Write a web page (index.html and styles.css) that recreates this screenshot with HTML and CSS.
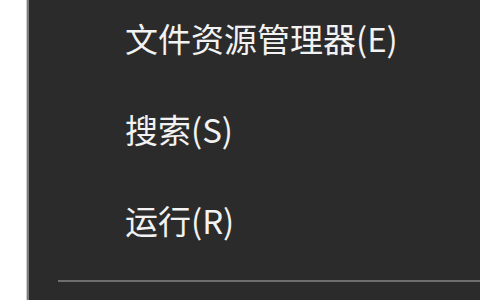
FILE: index.html
```html
<!DOCTYPE html>
<html lang="zh-CN">
  <head>
    <meta charset="UTF-8" />
    <meta name="viewport" content="width=device-width, initial-scale=1.0" />
    <title>开始菜单</title>
    <link rel="stylesheet" href="styles.css">
  </head>
  <body>
    <div class="menu">
      <div class="menu-item">文件资源管理器(E)</div>
      <div class="menu-item">搜索(S)</div>
      <div class="menu-item">运行(R)</div>
      <div class="separator"></div>
    </div>
  </body>
</html>
```

FILE: styles.css
```css
* {
  box-sizing: border-box;
  margin: 0;
  padding: 0;
}

html,
body {
  height: 100%;
  overflow: hidden;
}

body {
  background: #ffffff;
  font-family: "Noto Sans CJK SC", "Noto Sans", sans-serif;
}

.menu {
  margin-left: 27px;
  height: 100%;
  background: #2b2b2b;
  border-left: 2px solid #7b7b7b;
  box-shadow: -1px 0 0 #cfcfcf;
  padding-top: 22px;
  display: flex;
  flex-direction: column;
  gap: 58px;
}

.menu-item {
  padding-left: 96px;
  color: #f2f2f2;
  font-size: 33px;
  line-height: 33px;
  white-space: nowrap;
}

.separator {
  margin-left: 29px;
  margin-top: -15px;
  height: 2px;
  background: #6e6e6e;
}
```
